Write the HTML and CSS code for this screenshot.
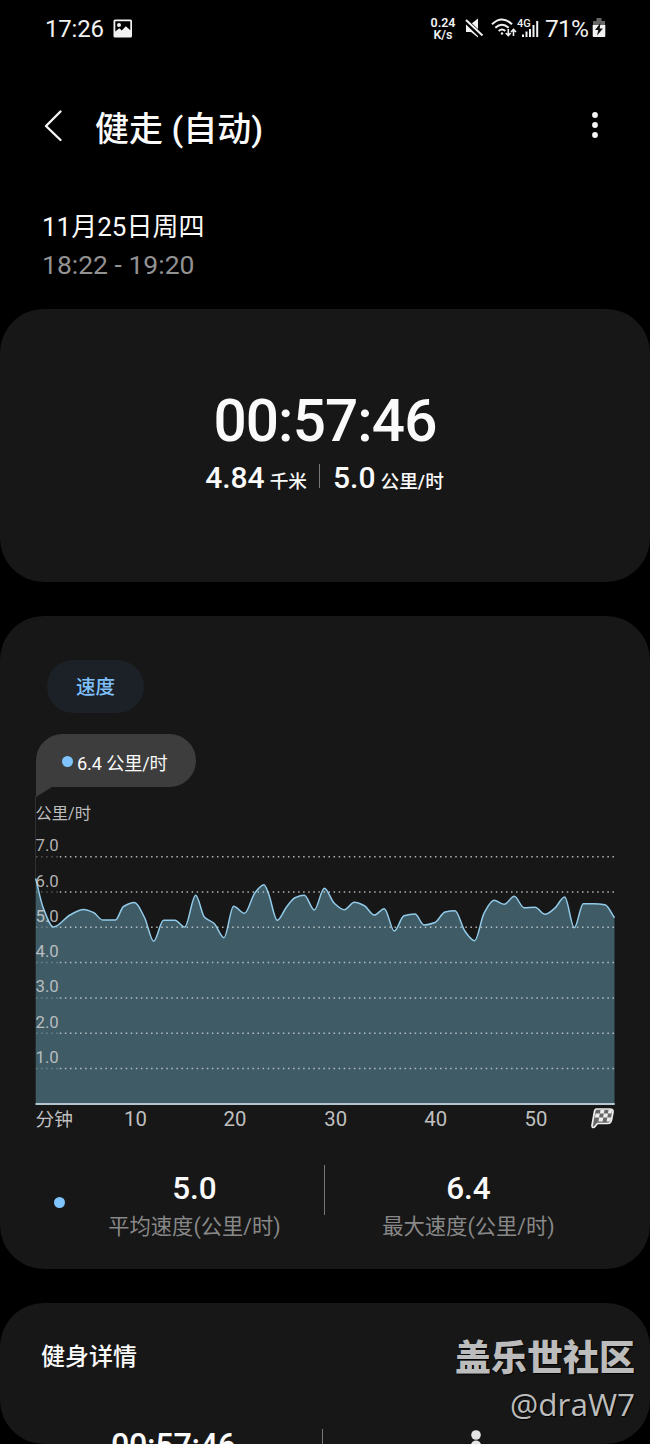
FILE: index.html
```html
<!DOCTYPE html>
<html lang="zh-CN">
<head>
<meta charset="utf-8">
<title>健走 (自动)</title>
<link rel="stylesheet" href="styles.css">
</head>
<body>
<div class="screen">
  <div class="status">
    <span class="clock">17:26</span>
    <svg class="pic" width="20" height="20" viewBox="0 0 20 20"><path fill="#f2f2f2" fill-rule="evenodd" d="M2 .5h15.500q1.500 0 1.500 1.500v15q0 1.500-1.500 1.500H2Q.5 18.500.5 17V2Q.5.500 2 .500ZM2.300 2.300v10.200l4-3.200 2.500 2.200 4-4.300 4.500 4V2.300Z"/><circle cx="6" cy="6" r="2" fill="#f2f2f2"/></svg>
    <div class="rate"><span>0.24</span><span>K/s</span></div>
    <svg class="mute" width="20" height="21" viewBox="0 0 20 21"><path fill="#f2f2f2" d="M1 6h5l7-5.500V19.500L6 14H1Z"/><path d="M1 3 17 18.500" stroke="#000" stroke-width="5"/><path d="M1 2 17.500 17.500" stroke="#f2f2f2" stroke-width="2"/></svg>
    <svg class="wifi" width="26" height="20" viewBox="0 0 26 20" fill="none" stroke="#f2f2f2" stroke-width="2"><path d="M1 6.300Q11-3.300 21 6.300M4.300 9.700q6.700-6 13.400 0M7.700 13q3.300-3 6.600 0"/><circle cx="11" cy="15.500" r="1.200" fill="#f2f2f2" stroke="none"/><path stroke="#000" stroke-width="4" d="M17.300 11v6.500"/><path stroke-width="1.600" d="M17.300 11v6.500M14.800 15l2.500 2.500 2.500-2.500M22.500 18v-6.500M20 14l2.500-2.500L25 14"/></svg>
    <svg class="signal" width="24" height="22" viewBox="0 0 24 22"><text x="0" y="10" class="net">4G</text><path fill="#f2f2f2" d="M5 17.500h2V20H5ZM8.500 14.500h2V20h-2ZM12 12h2v8h-2ZM15.500 8h2v12h-2ZM19.200 4h2v16h-2Z"/></svg>
    <span class="percent">71%</span>
    <svg class="battery" width="14" height="20" viewBox="0 0 14 20"><path fill="#666" d="M4.500 0h5v3H13v5H1V3h3.500Z"/><path fill="#f2f2f2" d="M.7 7h12.600v11q0 1-1 1H1.700q-1 0-1-1Z"/><path fill="#111" d="M8.500 5 3 12h3.300L5 17.500 11 10.500H7.700Z"/></svg>
  </div>
  <header class="header">
    <svg class="back" width="20" height="34" viewBox="0 0 20 34"><path d="M16.500 2.500 2 17l14.500 14" fill="none" stroke="#f5f5f5" stroke-width="2.400" stroke-linecap="round" stroke-linejoin="round"/></svg>
    <h1>健走 (自动)</h1>
    <svg class="more" width="8" height="30" viewBox="0 0 8 30" fill="#f5f5f5"><circle cx="4" cy="3" r="2.900"/><circle cx="4" cy="13" r="2.900"/><circle cx="4" cy="23" r="2.900"/></svg>
  </header>
  <div class="when">
    <div class="date">11月25日周四</div>
    <div class="hours">18:22 - 19:20</div>
  </div>
  <section class="card summary">
    <div class="duration">00:57:46</div>
    <div class="totals">
      <div><b>4.84</b><span>千米</span></div>
      <i></i>
      <div><b>5.0</b><span>公里/时</span></div>
    </div>
  </section>
  <section class="card speed">
    <div class="chip">速度</div>
    <div class="bubble">
      <svg class="tail" width="16" height="11" viewBox="0 0 16 11"><path d="M0 0h16L0 10Z" fill="#3d3d3d"/></svg>
      <span class="dot"></span><span class="value">6.4 公里/时</span>
    </div>
    <svg class="chart" width="650" height="336" viewBox="0 800 650 336">
      <text class="unit" x="35.500" y="818.500">公里/时</text>
      <path class="marker" d="M35.500 796V879"/>
      <path id="area" class="area"/>
      <path id="line" class="line"/>
      <path class="grid faint" d="M36 856.700H58M36 892H58M36 927.300H58M36 962.600H58M36 997.900H58M36 1033.200H58M36 1068.500H58"/>
      <path class="grid" d="M59.800 856.700H614.500M59.800 892H614.500M59.800 927.300H614.500M59.800 962.600H614.500M59.800 997.900H614.500M59.800 1033.200H614.500M59.800 1068.500H614.500"/>
      <g class="ylab"><text x="35.500" y="851.300">7.0</text><text x="35.500" y="886.600">6.0</text><text x="35.500" y="921.700">5.0</text><text x="35.500" y="957">4.0</text><text x="35.500" y="992">3.0</text><text x="35.500" y="1027.500">2.0</text><text x="35.500" y="1062.500">1.0</text></g>
      <path class="axis" d="M35.500 1104H614.700"/>
      <g class="xlab"><text class="start" x="35.500" y="1126">分钟</text><text x="135.500" y="1126">10</text><text x="235" y="1126">20</text><text x="335.700" y="1126">30</text><text x="435.700" y="1126">40</text><text x="535.900" y="1126">50</text></g>
      <g>
        <path d="M596.500 1109h13.500q3.500 0 3 3l-1.500 8q-.5 3.500-4 3.500h-10l-3 3.500q-2.500 1.500-2.500-1.500l2.500-14q.5-2.500 2-2.500Z" fill="#686868" stroke="#eee" stroke-width="1.700" stroke-linejoin="round"/>
        <path fill="#eee" d="M600.500 1110h4l-.7 3.500h-4ZM595.600 1113.500h4.200l-.7 4h-4.200ZM603.800 1113.500h4.200l-.7 4h-4.200ZM599.100 1117.500h4.200l-.7 4h-4.200ZM608.500 1110h3.500l-.5 3.500h-3.600ZM607.300 1117.500h3.800l-.7 4h-3.800Z"/>
      </g>
    </svg>
    <div class="stats">
      <span class="dot"></span>
      <div class="stat"><b>5.0</b><span>平均速度(公里/时)</span></div>
      <i></i>
      <div class="stat"><b>6.4</b><span>最大速度(公里/时)</span></div>
    </div>
  </section>
  <section class="card details">
    <h2>健身详情</h2>
    <div class="row">
      <b>00:57:46</b><i></i>
      <svg class="person" width="30" height="30" viewBox="0 0 30 30" fill="#e4e4e4"><circle cx="15" cy="6" r="4.800"/><path d="M15 11.500q4 0 5 4l2 8H8l2-8q1-4 5-4Z"/></svg>
    </div>
  </section>
  <div class="watermark"><b>盖乐世社区</b><span>@draW7</span></div>
</div>
<script src="chart.js"></script>
</body>
</html>
```
FILE: styles.css
```css
* { box-sizing: border-box; }
body { margin: 0; background: #000; color: #fafafa; font-family: Roboto, "Noto Sans CJK SC", sans-serif; }
h1, h2 { margin: 0; }
svg { display: block; flex: none; }
.screen { position: relative; width: 650px; height: 1444px; overflow: hidden; }
.status { display: flex; height: 58px; padding-left: 45px; color: #f2f2f2; white-space: nowrap; }
.clock { width: 67px; font-size: 24px; line-height: 58px; letter-spacing: -.2px; }
.pic { margin-top: 19px; margin-left: 1px; }
.rate { display: flex; flex-direction: column; align-items: center; width: 28px; margin: 17px 0 0 296px; font-size: 12.500px; font-weight: 600; line-height: 11.500px; }
.mute { margin: 18px 0 0 8px; }
.wifi { margin: 18px 0 0 6px; }
.signal { margin: 17px 0 0 0; }
.net { font-size: 11px; font-weight: 500; fill: #f2f2f2; }
.percent { width: 45px; margin-left: 4px; font-size: 24.500px; line-height: 58px; letter-spacing: -.8px; }
.battery { margin: 18px 0 0 2px; }
.header { display: flex; align-items: center; height: 138px; padding: 0 51px 0 44px; }
.back { margin-top: -3px; }
.header h1 { flex: 1; margin-left: 31px; padding-top: 3px; font-size: 34px; font-weight: 500; line-height: 40px; }
.when { height: 113px; padding: 12px 0 0 42px; }
.date { font-size: 26px; line-height: 38px; }
.hours { font-size: 26.500px; line-height: 38px; color: #929292; }
.card { background: #171717; border-radius: 44px; }
.summary { height: 273px; padding-top: 78px; }
.duration { height: 68px; text-align: center; font-size: 58.500px; font-weight: 500; line-height: 68px; letter-spacing: -.9px; }
.totals { display: flex; justify-content: center; padding-right: 1px; line-height: 46px; font-weight: 500; }
.totals b { font-size: 30px; font-weight: 500; }
.totals span { margin-left: 5px; font-size: 18.700px; }
.totals i { width: 1px; height: 24px; margin: 9px 13px 0 12px; background: #777; }
.speed { height: 653px; margin-top: 34px; padding-top: 44px; }
.chip { width: 97px; height: 53px; margin-left: 47px; padding-top: 1px; border-radius: 27px; background: #1b2126; color: #7fc0fb; text-align: center; font-size: 19.500px; font-weight: 500; line-height: 53px; }
.bubble { position: relative; display: flex; align-items: center; width: 160px; height: 53px; margin: 21px 0 0 35.500px; padding-left: 26.500px; border-radius: 27px 27px 27px 0; background: #3d3d3d; }
.tail { position: absolute; left: 0; top: 53px; }
.dot { width: 11px; height: 11px; border-radius: 50%; background: #7fc4ff; }
.bubble .dot { margin-top: 1px; }
.value { margin: 2px 0 0 4px; font-size: 18.200px; letter-spacing: -.15px; white-space: nowrap; }
.chart { margin-top: 13px; overflow: visible; }
.unit { font-size: 16.300px; fill: #bdbdbd; }
.marker { stroke: #303030; stroke-width: 1; }
.area { fill: #3f5b66; }
.line { fill: none; stroke: #92cbe9; stroke-width: 1.500; stroke-linejoin: round; }
.grid { fill: none; stroke: #c9d0d2; stroke-opacity: .85; stroke-width: 1.500; stroke-dasharray: 1.500 3.570; }
.faint { stroke-opacity: .35; }
.ylab { font-size: 16.800px; fill: #d0d0d0; fill-opacity: .85; }
.axis { stroke: #b4c5ce; stroke-width: 2; }
.xlab { font-size: 20.300px; fill: #c0c0c0; text-anchor: middle; }
.xlab .start { font-size: 18.700px; text-anchor: start; }
.stats { display: grid; grid-template-columns: 11px 259px 1px 288px; margin-left: 54px; height: 80px; }
.stats .dot { margin-top: 61px; }
.stats i { height: 50px; margin-top: 29px; background: #777; }
.stat { display: flex; flex-direction: column; align-items: center; padding-top: 31px; }
.stat b { font-size: 31.500px; font-weight: 500; line-height: 44px; }
.stat span { font-size: 21.300px; line-height: 32px; color: #888; }
.stat:last-child { padding-right: 1px; }
.details { height: 141px; margin-top: 34px; padding: 36px 0 0 41px; overflow: hidden; }
.details h2 { font-size: 24px; font-weight: 500; line-height: 36px; }
.row { display: flex; height: 60px; margin-top: 49px; }
.row b { width: 212px; padding-left: 70px; font-size: 32.300px; font-weight: 500; line-height: 44px; letter-spacing: -.3px; }
.row i { width: 1px; height: 50px; margin: 5px 0 0 69px; background: #777; }
.person { margin: 5px 0 0 138px; }
.watermark { position: absolute; right: 15px; top: 1335px; display: flex; flex-direction: column; align-items: flex-end; color: #bcbcbc; text-shadow: 1px 1px 1px #000; }
.watermark b { font-size: 36px; font-weight: 900; line-height: 48px; }
.watermark span { font-family: "Open Sans", sans-serif; font-size: 31.500px; line-height: 42px; }
```
FILE: chart.js
```js
// Speed curve vertices, in chart coordinates.
const pts = [[35.7,878.5],[43.3,908],[53.5,927],[70,915],[83.5,909.5],[93.5,912.5],[102.5,920],[115.5,920],[123.5,906.5],[134.5,902.5],[144.5,917.5],[153.7,941.3],[163.5,920.3],[175,920.3],[184.7,927],[195.7,895.3],[204.5,917.3],[214,923.3],[224,937.7],[233.6,906.2],[244.5,913.3],[255,892.7],[264,884.7],[268.5,893.5],[277.3,920.3],[286.7,906.7],[295,897.7],[304.3,895.3],[314.3,910],[324.3,888.3],[334.3,903.3],[344.3,909.7],[354.3,902.3],[364.3,905.7],[374.3,915],[384.3,908.7],[394.3,931],[404,915.7],[415,914],[424,925],[435,922.5],[445,912],[455,910.7],[465,931.3],[474.7,940.7],[484,913.3],[494,900.3],[504.3,904.3],[514.3,896.3],[524,907.7],[535,907.3],[545,914.3],[554.3,908.7],[564.7,897],[574.3,927.7],[583.3,903.7],[593.5,903.7],[605,904.7],[614.5,917.7]];
const slope = i => (pts[i + 1][1] - pts[i][1]) / (pts[i + 1][0] - pts[i][0]);
// Harmonic-mean tangents keep the curve monotone between vertices.
const tangent = pts.map((p, i) => {
  if (i === 0) return slope(0);
  if (i === pts.length - 1) return slope(i - 1);
  const a = slope(i - 1), b = slope(i);
  return a * b <= 0 ? 0 : 2 * a * b / (a + b);
});
let d = `M${pts[0]}`;
for (let i = 1; i < pts.length; i++) {
  const [x0, y0] = pts[i - 1], [x1, y1] = pts[i], h = (x1 - x0) / 3;
  d += `C${x0 + h},${y0 + tangent[i - 1] * h} ${x1 - h},${y1 - tangent[i] * h} ${x1},${y1}`;
}
document.getElementById('line').setAttribute('d', d);
document.getElementById('area').setAttribute('d', d + 'V1104H35.7Z');
```
